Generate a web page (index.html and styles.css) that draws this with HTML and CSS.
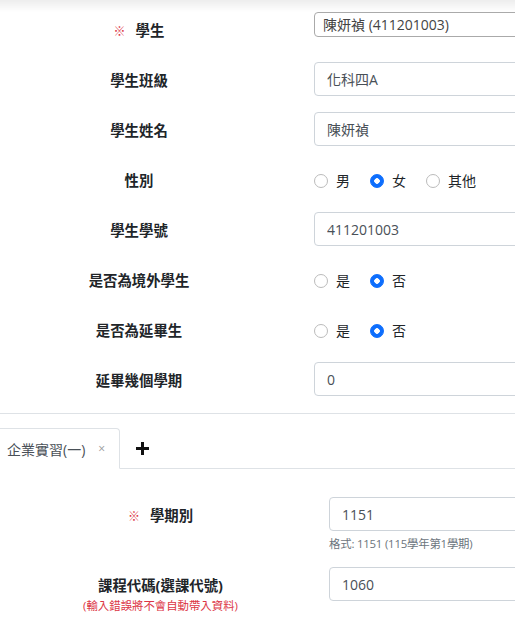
FILE: index.html
```html
<!DOCTYPE html>
<html lang="zh-Hant">
  <head>
    <meta charset="UTF-8" />
    <meta name="viewport" content="width=device-width, initial-scale=1.0" />
    <title>學生實習資料</title>
    <link rel="stylesheet" href="styles.css">
  </head>
  <body>
    <form class="student-form">
      <div class="form-row">
        <label class="form-label"><span class="required">※</span>學生</label>
        <div class="form-field">
          <div class="select-box">陳妍禎 (411201003)</div>
        </div>
      </div>

      <div class="form-row">
        <label class="form-label" for="class-name">學生班級</label>
        <div class="form-field">
          <input class="form-input" type="text" id="class-name" value="化科四A" />
        </div>
      </div>

      <div class="form-row">
        <label class="form-label" for="student-name">學生姓名</label>
        <div class="form-field">
          <input class="form-input" type="text" id="student-name" value="陳妍禎" />
        </div>
      </div>

      <div class="form-row">
        <label class="form-label">性別</label>
        <div class="form-field radio-group">
          <label class="radio"><input type="radio" name="gender" />男</label>
          <label class="radio"><input type="radio" name="gender" checked />女</label>
          <label class="radio"><input type="radio" name="gender" />其他</label>
        </div>
      </div>

      <div class="form-row">
        <label class="form-label" for="student-no">學生學號</label>
        <div class="form-field">
          <input class="form-input" type="text" id="student-no" value="411201003" />
        </div>
      </div>

      <div class="form-row">
        <label class="form-label">是否為境外學生</label>
        <div class="form-field radio-group">
          <label class="radio"><input type="radio" name="overseas" />是</label>
          <label class="radio"><input type="radio" name="overseas" checked />否</label>
        </div>
      </div>

      <div class="form-row">
        <label class="form-label">是否為延畢生</label>
        <div class="form-field radio-group">
          <label class="radio"><input type="radio" name="delayed" />是</label>
          <label class="radio"><input type="radio" name="delayed" checked />否</label>
        </div>
      </div>

      <div class="form-row">
        <label class="form-label" for="delay-terms">延畢幾個學期</label>
        <div class="form-field">
          <input class="form-input" type="text" id="delay-terms" value="0" />
        </div>
      </div>
    </form>

    <hr class="divider" />

    <ul class="nav-tabs">
      <li class="tab active">企業實習(一)<span class="tab-close">×</span></li>
      <li class="tab-add">
        <svg width="13" height="13" viewBox="0 0 13 13">
          <path d="M6.5 0v13M0 6.5h13" stroke="#111" stroke-width="3" />
        </svg>
      </li>
    </ul>

    <div class="tab-content">
      <div class="form-row wide">
        <label class="form-label" for="semester"><span class="required">※</span>學期別</label>
        <div class="form-field">
          <input class="form-input" type="text" id="semester" value="1151" />
          <small class="help-text">格式: 1151 (115學年第1學期)</small>
        </div>
      </div>

      <div class="form-row wide">
        <label class="form-label" for="course-code">
          課程代碼(選課代號)
          <small class="label-note">(輸入錯誤將不會自動帶入資料)</small>
        </label>
        <div class="form-field">
          <input class="form-input" type="text" id="course-code" value="1060" />
        </div>
      </div>
    </div>
  </body>
</html>
```

FILE: styles.css
```css
html,
body {
  overflow-x: hidden;
}

body {
  margin: 0;
  font-family: "Open Sans", "Noto Sans CJK TC", sans-serif;
  font-size: 14px;
  color: #212529;
  background-color: white;
}

body::before {
  content: '';
  position: fixed;
  top: 0;
  left: 0;
  right: 0;
  height: 12px;
  background: linear-gradient(rgba(0, 0, 0, 0.07), rgba(0, 0, 0, 0));
}

.student-form {
  padding-top: 12px;
}

.form-row {
  display: grid;
  grid-template-columns: 278px 420px;
  column-gap: 36px;
  min-height: 34px;
  margin-bottom: 16px;
}

.form-row.wide {
  grid-template-columns: 321px 420px;
  column-gap: 8px;
  margin-bottom: 14px;
}

.form-label {
  padding-top: 7px;
  line-height: 24px;
  text-align: center;
  font-weight: bold;
  font-size: 14.4px;
}

.required {
  color: #dc3545;
  font-weight: normal;
  font-size: 12px;
  margin-right: 10px;
}

.label-note {
  display: block;
  font-size: 11.4px;
  line-height: 16px;
  font-weight: normal;
  color: #dc3545;
}

.form-input {
  width: 100%;
  height: 34px;
  padding: 0 12px;
  border: 1px solid #ced4da;
  border-radius: 4px;
  box-sizing: border-box;
  font-family: inherit;
  font-size: 14px;
  color: #495057;
}

.select-box {
  height: 25px;
  line-height: 23px;
  padding: 0 8px;
  border: 1px solid #aaa;
  border-radius: 4px;
  box-sizing: border-box;
  color: #444;
}

.help-text {
  display: block;
  margin-top: 4px;
  line-height: 18px;
  font-size: 11.4px;
  letter-spacing: -0.2px;
  color: #6c757d;
}

.radio-group {
  display: flex;
  align-items: center;
  gap: 20px;
  padding-top: 7px;
  height: 24px;
}

.radio {
  display: flex;
  align-items: center;
  gap: 8px;
  line-height: 24px;
}

.radio input {
  appearance: none;
  margin: 0;
  width: 14px;
  height: 14px;
  border: 1px solid #bbb;
  border-radius: 50%;
  background-color: white;
}

.radio input:checked {
  border-color: #0d6efd;
  background: radial-gradient(circle, #fff 0 2.5px, #0d6efd 3px);
}

.divider {
  margin: 17px 0 0;
  border: 0;
  border-top: 1px solid #dee2e6;
}

.nav-tabs {
  display: flex;
  list-style: none;
  margin: 14px 0 0 -9px;
  padding: 0;
  border-bottom: 1px solid #dee2e6;
}

.tab {
  display: flex;
  align-items: center;
  height: 39px;
  padding: 0 14px 0 15px;
  margin-bottom: -1px;
  border: 1px solid #dee2e6;
  border-bottom-color: white;
  border-radius: 4px 4px 0 0;
  color: #495057;
  background-color: white;
}

.tab-close {
  margin-left: 13px;
  font-size: 12px;
  color: #999;
}

.tab-add {
  display: flex;
  align-items: center;
  padding: 0 16px;
}

.tab-content {
  padding-top: 28px;
}
```
